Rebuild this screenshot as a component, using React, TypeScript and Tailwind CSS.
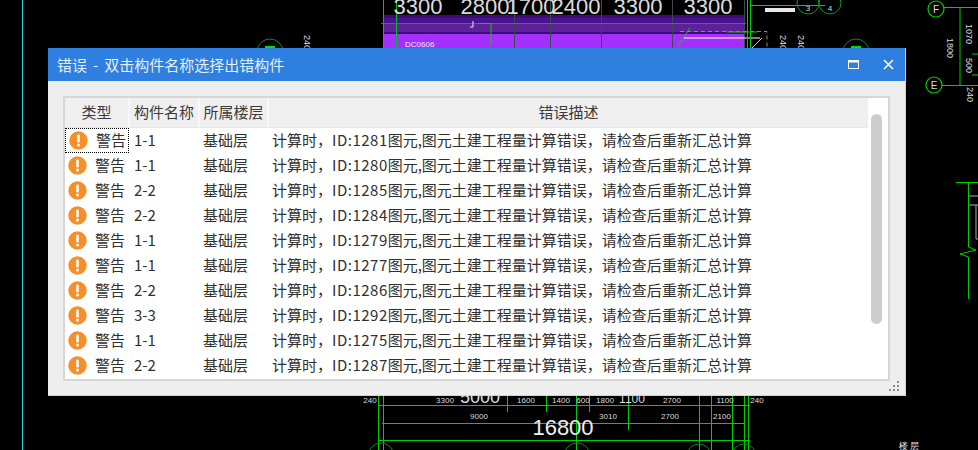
const cn = "font-['Noto_Sans_CJK_SC','Liberation_Sans',sans-serif]";

const rows = [
  ["1-1", "1281"],
  ["1-1", "1280"],
  ["2-2", "1285"],
  ["2-2", "1284"],
  ["1-1", "1279"],
  ["1-1", "1277"],
  ["2-2", "1286"],
  ["3-3", "1292"],
  ["1-1", "1275"],
  ["2-2", "1287"],
];

function WarnIcon() {
  return (
    <svg width="19" height="19" viewBox="0 0 19 19" className="shrink-0">
      <circle cx="9.5" cy="9.5" r="9.2" fill="#f58f2a" />
      <rect x="8.2" y="3.6" width="2.6" height="7.8" rx="1.2" fill="#fff" />
      <circle cx="9.5" cy="14" r="1.5" fill="#fff" />
    </svg>
  );
}

// the CAD drawing behind the dialog
function CadDrawing() {
  const g = "#00d000";
  const topX = [383, 396, 514, 550, 601, 672, 744];
  const botX = [378, 383, 507, 546, 576, 589, 628, 699, 711, 732, 744, 748];
  const dims = [
    [418, "3300"],
    [485, "2800"],
    [531, "1700"],
    [576, "2400"],
    [638, "3300"],
    [708, "3300"],
  ] as const;
  return (
    <svg width="978" height="450" viewBox="0 0 978 450" className="block" fontFamily="'Liberation Sans', sans-serif">
      <line x1="22.5" y1="0" x2="22.5" y2="450" stroke="#19d8d8" strokeWidth="1" />

      {/* purple slab */}
      <rect x="383" y="15" width="362" height="33" fill="#a52fff" />
      <rect x="383" y="15" width="362" height="3" fill="#3c0d78" />
      <rect x="383" y="18" width="362" height="5" fill="#4a1490" />
      <rect x="383" y="23" width="362" height="9" fill="#5d2199" />
      <rect x="383" y="32" width="362" height="2" fill="#3c0d78" />
      {topX.map((x) => (
        <line key={x} x1={x + 0.5} y1="0" x2={x + 0.5} y2="48" stroke={x === 383 || x === 396 ? "#00c020" : "#3a4a50"} strokeWidth="1" />
      ))}
      <line x1="381" y1="23.5" x2="746" y2="23.5" stroke="#0fa020" />
      <path d="M478 23.5H491V45" stroke={g} fill="none" />
      <path d="M473 21V27H470" stroke="#eee" fill="none" />
      <text x="405" y="47" fontSize="8" fill="#e8e8ff">DC0606</text>
      <path d="M678 46L690 28" stroke={g} fill="none" />
      <path d="M684 38H760" stroke="#fff" fill="none" />
      <path d="M680 31.5H767V48" stroke="#888" strokeDasharray="4 3" fill="none" />
      <path d="M752 48L762 38" stroke="#ccc" fill="none" />
      <path d="M727 32H757" stroke={g} fill="none" />
      <path d="M747.5 0V48M750.5 0V48M750 5.5H825" stroke={g} fill="none" />
      {dims.map(([x, t], i) => (
        <text key={i} x={x} y="14" fontSize="22" textAnchor="middle" fill="#dcdcdc">{t}</text>
      ))}
      <rect x="765" y="8" width="30" height="4" fill="#e8e8e8" />
      <circle cx="808" cy="3" r="11" stroke="#0a9a20" fill="none" />
      <circle cx="830" cy="3" r="11" stroke="#0a9a20" fill="none" />
      <text x="808" y="11" fontSize="8" textAnchor="middle" fill="#ddd">3</text>
      <text x="830" y="11" fontSize="8" textAnchor="middle" fill="#ddd">4</text>

      {/* small marks just above the dialog */}
      <circle cx="270" cy="52" r="13" stroke="#0a8a20" fill="none" />
      <path d="M265 47H275" stroke="#00e000" strokeWidth="2" />
      <text x="0" y="0" fontSize="9" fill="#ddd" transform="translate(304,35) rotate(90)">240</text>
      <circle cx="856" cy="52" r="13" stroke="#0a8a20" fill="none" />
      <path d="M851 47H861" stroke="#00e000" strokeWidth="2" />
      <text x="0" y="0" fontSize="9" fill="#ddd" transform="translate(780,35) rotate(90)">240</text>
      <text x="0" y="0" fontSize="9" fill="#ddd" transform="translate(798,35) rotate(90)">240</text>

      {/* right side */}
      <circle cx="936" cy="9" r="8" stroke={g} strokeWidth="1.2" fill="none" />
      <text x="936" y="13" fontSize="10" textAnchor="middle" fill="#ddd">F</text>
      <circle cx="934" cy="85" r="8" stroke={g} strokeWidth="1.2" fill="none" />
      <text x="934" y="89" fontSize="10" textAnchor="middle" fill="#ddd">E</text>
      <path d="M944 7.5H978M942 85.5H978M960 7V86M972 54H978M972 75H978" stroke={g} fill="none" />
      <text x="0" y="0" fontSize="9" fill="#ddd" transform="translate(947,38) rotate(90)">1800</text>
      <text x="0" y="0" fontSize="9" fill="#ddd" transform="translate(966,24) rotate(90)">1070</text>
      <text x="0" y="0" fontSize="9" fill="#ddd" transform="translate(966,58) rotate(90)">500</text>
      <text x="0" y="0" fontSize="9" fill="#ddd" transform="translate(967,87) rotate(90)">240</text>
      <path d="M956 182.5H978M968.5 183V247L976 250L960 254L968.5 257V299" stroke={g} fill="none" />
      <path d="M969 196H978M969 205H978M976 205V239H978" stroke="#aaa" fill="none" />

      {/* dimensions below the dialog */}
      <path d="M378 405.5H750M382 423.5H744M378 440.5H750" stroke={g} fill="none" />
      {botX.map((x) => (
        <line key={x} x1={x + 0.5} y1="396" x2={x + 0.5} y2={x === 628 ? 430 : x === 507 || x === 546 || x === 589 ? 412 : 450} stroke={g} />
      ))}
      <text x="370" y="403" fontSize="8" textAnchor="middle" fill="#ddd">240</text>
      <text x="445" y="403" fontSize="8" textAnchor="middle" fill="#ddd">3300</text>
      <text x="480" y="403" fontSize="18" textAnchor="middle" fill="#ddd">5000</text>
      <text x="526" y="403" fontSize="8" textAnchor="middle" fill="#ddd">1600</text>
      <text x="561" y="403" fontSize="8" textAnchor="middle" fill="#ddd">1400</text>
      <text x="583" y="403" fontSize="8" textAnchor="middle" fill="#ddd">600</text>
      <text x="605" y="403" fontSize="8" textAnchor="middle" fill="#ddd">1800</text>
      <text x="632" y="403" fontSize="12" textAnchor="middle" fill="#ddd">1100</text>
      <text x="672" y="403" fontSize="8" textAnchor="middle" fill="#ddd">2700</text>
      <text x="725" y="403" fontSize="8" textAnchor="middle" fill="#ddd">1100</text>
      <text x="757" y="403" fontSize="8" textAnchor="middle" fill="#ddd">240</text>
      <text x="479" y="419" fontSize="8" textAnchor="middle" fill="#ddd">9000</text>
      <text x="608" y="419" fontSize="8" textAnchor="middle" fill="#ddd">3010</text>
      <text x="670" y="419" fontSize="8" textAnchor="middle" fill="#ddd">2700</text>
      <text x="722" y="419" fontSize="8" textAnchor="middle" fill="#ddd">2100</text>
      <text x="563" y="435" fontSize="22" textAnchor="middle" fill="#f0f0f0">16800</text>
      <circle cx="381" cy="456" r="13" stroke="#0a8a20" fill="none" />
      <circle cx="577" cy="456" r="13" stroke="#0a8a20" fill="none" />
      <circle cx="699" cy="456" r="12" stroke="#0a8a20" fill="none" />
      <circle cx="744" cy="456" r="12" stroke="#0a8a20" fill="none" />
      <text x="909" y="449" fontSize="9" textAnchor="middle" fill="#eee">楼 层</text>
    </svg>
  );
}

export default function App() {
  return (
    <div className={`relative w-[978px] h-[450px] overflow-hidden bg-black ${cn}`}>
      <CadDrawing />

      {/* dialog */}
      <div className="absolute left-[48px] top-[48px] w-[858px] h-[348px] flex flex-col bg-[#eeeeee] border-b border-r border-[#cdd3da]">
        <div className="h-[33px] shrink-0 flex items-center bg-[#2e7fe0] text-white">
          <span className="pl-[9px] text-[15px] leading-none text-[#e6f0fc] whitespace-nowrap">
            错误<span className="mx-[6px]">-</span>
            <span>双击构件名称选择出错构件</span>
          </span>
          <div className="ml-auto flex items-center">
            <svg width="12" height="10" viewBox="0 0 12 10" className="mr-[23px]">
              <rect x="0.5" y="0.5" width="10" height="8" fill="none" stroke="#fff" />
              <rect x="0.5" y="0.5" width="10" height="2" fill="#fff" />
            </svg>
            <svg width="11" height="11" viewBox="0 0 11 11" className="mr-[11px]">
              <path d="M1 1L10 10M10 1L1 10" stroke="#fff" strokeWidth="1.5" />
            </svg>
          </div>
        </div>

        <div className="flex-1 min-h-0 p-[15px] relative">
          <div className="h-[285px] bg-white border-2 border-[#d6d6d6] flex">
            <div className="flex-1 min-w-0 text-[15px] text-[#303030]">
              <div className="h-[30px] flex bg-[#efefef] border-b border-[#e6e6e6] w-[803px] text-[#3a3a3a]">
                <div className="w-[63px] flex items-center justify-center">类型</div>
                <div className="w-[2px] bg-[#f8f8f8]" />
                <div className="w-[68px] flex items-center justify-center">构件名称</div>
                <div className="w-[2px] bg-[#f8f8f8]" />
                <div className="w-[67px] flex items-center justify-center">所属楼层</div>
                <div className="w-[2px] bg-[#f8f8f8]" />
                <div className="flex-1 flex items-center justify-center">错误描述</div>
              </div>
              {rows.map(([name, id], i) => (
                <div key={id} className="h-[25px] flex items-center">
                  <div className={`w-[64px] h-[25px] flex items-center pl-[3px] ${i === 0 ? "border border-dotted border-black pl-[2px]" : ""}`}>
                    <WarnIcon />
                    <span className="ml-[8px] whitespace-nowrap">警告</span>
                  </div>
                  <div className="w-[70px] pl-[5px]">{name}</div>
                  <div className="w-[70px] pl-[4px]">基础层</div>
                  <div className="pl-[3px] whitespace-nowrap">
                    {"计算时\uFF0C"}
                    <span className="tracking-[0.5px]">{`ID:${id}`}</span>
                    {"图元,图元土建工程量计算错误\uFF0C请检查后重新汇总计算"}
                  </div>
                </div>
              ))}
            </div>
            <div className="w-[23px] shrink-0 pt-[16px] pl-[6px]">
              <div className="w-[11px] h-[210px] rounded-full bg-[#cdcdcd]" />
            </div>
          </div>

          {/* resize grip */}
          <svg width="12" height="11" viewBox="0 0 12 11" className="absolute right-[4px] bottom-[3px]" fill="#8a8a8a">
            <rect x="8" y="0" width="2" height="2" />
            <rect x="4" y="4" width="2" height="2" />
            <rect x="8" y="4" width="2" height="2" />
            <rect x="0" y="8" width="2" height="2" />
            <rect x="4" y="8" width="2" height="2" />
            <rect x="8" y="8" width="2" height="2" />
          </svg>
        </div>
      </div>
    </div>
  );
}
